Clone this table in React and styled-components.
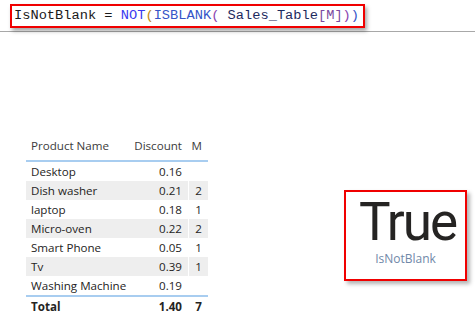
import styled, { createGlobalStyle } from "styled-components";

const GlobalStyle = createGlobalStyle`
  html, body {
    margin: 0;
    padding: 0;
    background: #ffffff;
  }
  body {
    width: 475px;
    height: 325px;
    overflow: hidden;
    font-family: "Open Sans", "Noto Sans", sans-serif;
  }
`;

const FormulaBar = styled.div`
  height: 32px;
  border-bottom: 1px solid #a8a8a8;
  padding: 2px 0 0 10px;
  box-sizing: border-box;
`;

const FormulaBox = styled.div`
  display: inline-block;
  border: 2px solid #f00000;
  padding: 2px 4px 2px 2px;
  font-family: "Liberation Mono", "DejaVu Sans Mono", monospace;
  font-size: 13.7px;
  line-height: 16px;
  color: #1a1a1a;
  white-space: pre;
  box-shadow: 2px 3px 4px rgba(0, 0, 0, 0.35);
`;

const Tok = styled.span`
  color: ${({ c }) => c};
`;

const Canvas = styled.div`
  display: flex;
  align-items: flex-start;
  padding: 0 8px 0 26px;
`;

const Table = styled.div`
  width: 182px;
  margin-top: 102px;
  font-size: 11.6px;
  color: #252423;
`;

const Row = styled.div`
  display: grid;
  grid-template-columns: 110px 52px 20px;
  height: ${({ h }) => h || 19}px;
  padding-bottom: ${({ head }) => (head ? 4 : 0)}px;
  align-items: center;
  background: ${({ striped }) => (striped ? "#eeeeee" : "transparent")};
  border-top: ${({ line }) => (line ? "2px solid #a8cdf0" : "none")};
  font-weight: ${({ bold }) => (bold ? 700 : 400)};
  color: ${({ head }) => (head ? "#3c3c3c" : "#252423")};
`;

const Cell = styled.div`
  padding: ${({ right }) => (right ? "0 6px 0 0" : "0 0 0 5px")};
  white-space: nowrap;
  height: 100%;
  display: flex;
  align-items: center;
  justify-content: ${({ right }) => (right ? "flex-end" : "flex-start")};
  border-left: ${({ sep }) => (sep ? "1px solid #ffffff" : "none")};
`;

const Card = styled.div`
  margin-left: auto;
  margin-top: 158px;
  width: 123px;
  height: 91px;
  box-sizing: border-box;
  border: 2px solid #f00000;
  box-shadow: 3px 3px 4px rgba(0, 0, 0, 0.3);
  display: flex;
  flex-direction: column;
  align-items: center;
`;

const Value = styled.div`
  font-family: "Roboto", "Open Sans", sans-serif;
  font-size: 53px;
  line-height: 58px;
  margin-top: 1px;
  margin-left: 4px;
  letter-spacing: -2px;
  color: #252423;
`;

const Label = styled.div`
  font-size: 12px;
  line-height: 16px;
  color: #7088a8;
`;

const rows = [
  ["Desktop", "0.16", ""],
  ["Dish washer", "0.21", "2"],
  ["laptop", "0.18", "1"],
  ["Micro-oven", "0.22", "2"],
  ["Smart Phone", "0.05", "1"],
  ["Tv", "0.39", "1"],
  ["Washing Machine", "0.19", ""],
];

export default function App() {
  return (
    <>
      <GlobalStyle />
      <FormulaBar>
        <FormulaBox>
          IsNotBlank = <Tok c="#3a3af0">NOT</Tok>
          <Tok c="#c08a10">(</Tok>
          <Tok c="#3555c8">ISBLANK</Tok>
          <Tok c="#8a44b0">(</Tok> <Tok c="#1d2a5e">Sales_Table</Tok>
          <Tok c="#7a4aa0">[M]</Tok>
          <Tok c="#8a44b0">)</Tok>
          <Tok c="#3555c8">)</Tok>
        </FormulaBox>
      </FormulaBar>
      <Canvas>
        <Table>
          <Row head h={22}>
            <Cell>Product Name</Cell>
            <Cell right>Discount</Cell>
            <Cell right>M</Cell>
          </Row>
          {rows.map((r, i) => (
            <Row key={r[0]} striped={i % 2 === 1} line={i === 0}>
              <Cell>{r[0]}</Cell>
              <Cell right>{r[1]}</Cell>
              <Cell right sep>{r[2]}</Cell>
            </Row>
          ))}
          <Row line bold h={18}>
            <Cell>Total</Cell>
            <Cell right>1.40</Cell>
            <Cell right>7</Cell>
          </Row>
        </Table>
        <Card>
          <Value>True</Value>
          <Label>IsNotBlank</Label>
        </Card>
      </Canvas>
    </>
  );
}
